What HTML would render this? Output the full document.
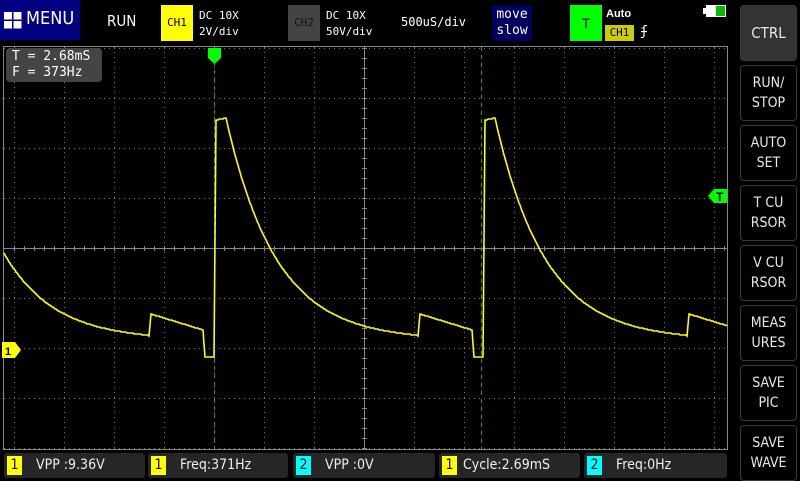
<!DOCTYPE html>
<html><head><meta charset="utf-8"><style>
body{margin:0;width:800px;height:480px;background:#000;overflow:hidden;position:relative;font-family:"DejaVu Sans Mono","Liberation Mono",monospace;color:#fff}
.a{position:absolute}
.btn{position:absolute;left:740px;width:55px;height:54px;border:1px solid #3a3a3a;border-radius:4px;color:#e8e8e8;font:14px "DejaVu Sans Condensed","Liberation Sans",sans-serif;display:flex;align-items:center;justify-content:center;text-align:center;line-height:20px}
.m{position:absolute;top:453px;height:25px;background:#262626;border-radius:3px;font:14px "DejaVu Sans Condensed","Liberation Sans",sans-serif;color:#eee;line-height:25px}
.m b{position:absolute;left:3px;top:3px;width:15px;height:19px;background:#ff0;color:#000;font-weight:normal;text-align:center;line-height:19px}
.m span{position:absolute;left:32px}
</style></head><body>
<div class="a" style="left:0;top:0;width:80px;height:40px;background:#000080"></div>
<svg class="a" style="left:4px;top:12px" width="18" height="17"><rect x="0" y="0" width="8" height="7.5" fill="#fff"/><rect x="9.5" y="0" width="8" height="7.5" fill="#fff"/><rect x="0" y="9" width="8" height="7.5" fill="#fff"/><rect x="9.5" y="9" width="8" height="7.5" fill="#fff"/></svg>
<div class="a" style="left:26px;top:8px;font:18px 'DejaVu Sans Condensed','Liberation Sans',sans-serif">MENU</div>
<div class="a" style="left:107px;top:12px;font:15px 'DejaVu Sans Condensed','Liberation Sans',sans-serif">RUN</div>
<div class="a" style="left:161px;top:5px;width:32px;height:36px;background:#ff0;color:#000;font-size:11px;line-height:36px;text-align:center">CH1</div>
<div class="a" style="left:199px;top:8px;font-size:11px;line-height:16px">DC 10X<br>2V/div</div>
<div class="a" style="left:288px;top:5px;width:32px;height:36px;background:#444;color:#111;font-size:11px;line-height:36px;text-align:center">CH2</div>
<div class="a" style="left:326px;top:8px;font-size:11px;line-height:16px">DC 10X<br>50V/div</div>
<div class="a" style="left:401px;top:15px;font-size:12px">500uS/div</div>
<div class="a" style="left:492px;top:5px;width:40px;height:36px;background:#000060;font-size:13px;line-height:16px;text-align:center;padding-top:2px;box-sizing:border-box">move<br>slow</div>
<div class="a" style="left:570px;top:5px;width:32px;height:36px;background:#0f0;color:#000;font:14px 'Liberation Sans',sans-serif;line-height:36px;text-align:center">T</div>
<div class="a" style="left:606px;top:8px;font:bold 11px 'Liberation Sans',sans-serif">Auto</div>
<div class="a" style="left:605px;top:25px;width:29px;height:16px;background:#cc0;color:#000;font-size:11px;line-height:16px;text-align:center">CH1</div>
<div class="a" style="left:640px;top:24px;font-size:13px">ʄ</div>
<div class="a" style="left:703px;top:8px;width:3px;height:6px;background:#fff"></div>
<div class="a" style="left:706px;top:5px;width:20px;height:12px;background:#fff"></div>
<div class="a" style="left:716px;top:6px;width:9px;height:10px;background:#0b0"></div>
<div class="btn" style="top:5px;background:#333;font-size:15px">CTRL</div>
<div class="btn" style="top:65px">RUN/<br>STOP</div>
<div class="btn" style="top:125px">AUTO<br>SET</div>
<div class="btn" style="top:185px">T CU<br>RSOR</div>
<div class="btn" style="top:245px">V CU<br>RSOR</div>
<div class="btn" style="top:305px">MEAS<br>URES</div>
<div class="btn" style="top:365px">SAVE<br>PIC</div>
<div class="btn" style="top:425px">SAVE<br>WAVE</div>
<svg class="a" style="left:0;top:0" width="800" height="480" id="sv">
<rect x="3.5" y="46.5" width="724" height="403" fill="none" stroke="#888"/>
<g id="grid" stroke="#777" stroke-width="1" stroke-dasharray="1 4"></g>
<line x1="4" y1="248.5" x2="727" y2="248.5" stroke="#888"/>
<line x1="364.5" y1="47" x2="364.5" y2="449" stroke="#888"/>
<g id="ticks" stroke="#888"></g>
<line x1="214.5" y1="62" x2="214.5" y2="449" stroke="#1a1" stroke-dasharray="4 4"/>
<line x1="481.5" y1="47" x2="481.5" y2="449" stroke="#1a1" stroke-dasharray="4 4"/>
<polygon points="208,48 221,48 221,58 214.5,64 208,58" fill="#0f0"/>
<polyline id="w" fill="none" stroke="#ff0" stroke-width="1.6"/>
<polygon points="2,342 15,342 21,350 15,358 2,358" fill="#ff0"/>
<text x="5" y="355" font-family="Liberation Sans" font-weight="bold" font-size="11" fill="#000">1</text>
<polygon points="727,189 714,189 708,196 714,203 727,203" fill="#0f0"/>
<text x="716" y="201" font-family="Liberation Sans" font-weight="bold" font-size="12" fill="#000">T</text>
</svg>
<div class="a" style="left:6px;top:48px;width:96px;height:34px;background:#444;border-radius:4px;font-size:13px;line-height:16px;padding:1px 0 0 6px;box-sizing:border-box">T = 2.68mS<br>F = 373Hz</div>
<div class="m" style="left:4px;width:141px"><b>1</b><span>VPP :9.36V</span></div>
<div class="m" style="left:148px;width:140px"><b>1</b><span>Freq:371Hz</span></div>
<div class="m" style="left:293px;width:142px"><b style="background:#0ff">2</b><span>VPP :0V</span></div>
<div class="m" style="left:439px;width:141px"><b>1</b><span style="left:24px">Cycle:2.69mS</span></div>
<div class="m" style="left:584px;width:143px"><b style="background:#0ff">2</b><span>Freq:0Hz</span></div>
<script>
var ns="http://www.w3.org/2000/svg",g=document.getElementById('grid'),t=document.getElementById('ticks');
function L(p,x1,y1,x2,y2){var l=document.createElementNS(ns,'line');l.setAttribute('x1',x1);l.setAttribute('y1',y1);l.setAttribute('x2',x2);l.setAttribute('y2',y2);p.appendChild(l);}
for(var x=14.5;x<720;x+=50){if(Math.abs(x-364.5)>1)L(g,x,47,x,449);}
for(var y=48.5;y<450;y+=50){if(Math.abs(y-248.5)>1)L(g,4,y,727,y);}
for(var x=14.5;x<727;x+=10)L(t,x,246,x,251);
for(var y=48.5;y<450;y+=10)L(t,362,y,367,y);
function f(u){u=((u%269)+269)%269;
 if(u<2)return 357-237*u/2;
 if(u<12)return 120-2*(u-2)/10;
 if(u<204)return 340-222*Math.exp(-(u-12)/50);
 if(u<206)return 336-22*(u-204)/2;
 if(u<258)return 314+16*(u-206)/52;
 if(u<260)return 330+27*(u-258)/2;
 return 357;}
var pts=[];for(var x=4;x<=727;x+=1){pts.push(x+','+Math.round(f(x-214)));}
document.getElementById('w').setAttribute('points',pts.join(' '));
</script>
</body></html>
